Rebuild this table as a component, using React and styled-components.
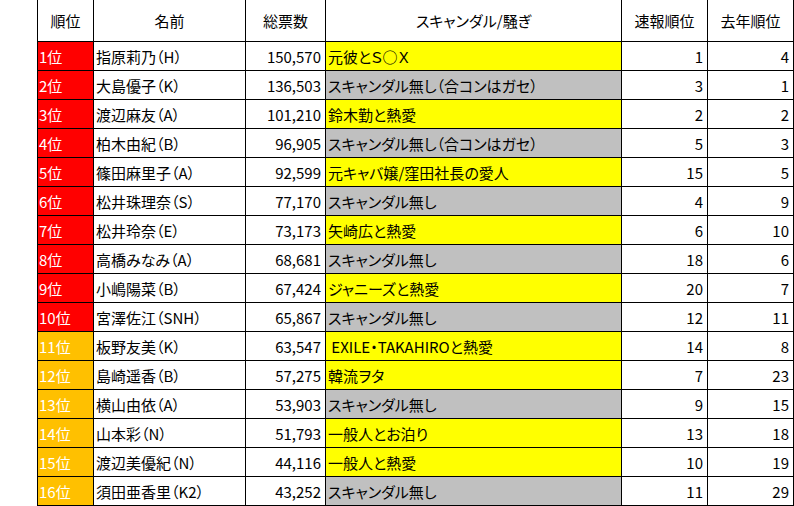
import React from 'react'
import styled, { createGlobalStyle } from 'styled-components'

const GlobalStyle = createGlobalStyle`
  html, body {
    margin: 0;
    padding: 0;
    background: #ffffff;
  }
  body {
    font-family: "Noto Sans CJK JP", "Noto Sans", sans-serif;
  }
`

const rows = [
  { name: '指原莉乃（H）', votes: '150,570', note: '元彼とＳ○Ｘ', hot: true, flash: 1, last: 4 },
  { name: '大島優子（K）', votes: '136,503', note: 'スキャンダル無し（合コンはガセ）', hot: false, flash: 3, last: 1 },
  { name: '渡辺麻友（A）', votes: '101,210', note: '鈴木勤と熱愛', hot: true, flash: 2, last: 2 },
  { name: '柏木由紀（B）', votes: '96,905', note: 'スキャンダル無し（合コンはガセ）', hot: false, flash: 5, last: 3 },
  { name: '篠田麻里子（A）', votes: '92,599', note: '元キャバ嬢/窪田社長の愛人', hot: true, flash: 15, last: 5 },
  { name: '松井珠理奈（S）', votes: '77,170', note: 'スキャンダル無し', hot: false, flash: 4, last: 9 },
  { name: '松井玲奈（E）', votes: '73,173', note: '矢崎広と熱愛', hot: true, flash: 6, last: 10 },
  { name: '高橋みなみ（A）', votes: '68,681', note: 'スキャンダル無し', hot: false, flash: 18, last: 6 },
  { name: '小嶋陽菜（B）', votes: '67,424', note: 'ジャニーズと熱愛', hot: true, flash: 20, last: 7 },
  { name: '宮澤佐江（SNH）', votes: '65,867', note: 'スキャンダル無し', hot: false, flash: 12, last: 11 },
  { name: '板野友美（K）', votes: '63,547', note: ' EXILE・TAKAHIROと熱愛', hot: true, flash: 14, last: 8 },
  { name: '島崎遥香（B）', votes: '57,275', note: '韓流ヲタ', hot: true, flash: 7, last: 23 },
  { name: '横山由依（A）', votes: '53,903', note: 'スキャンダル無し', hot: false, flash: 9, last: 15 },
  { name: '山本彩（N）', votes: '51,793', note: '一般人とお泊り', hot: true, flash: 13, last: 18 },
  { name: '渡辺美優紀（N）', votes: '44,116', note: '一般人と熱愛', hot: true, flash: 10, last: 19 },
  { name: '須田亜香里（K2）', votes: '43,252', note: 'スキャンダル無し', hot: false, flash: 11, last: 29 },
]

const headers = ['順位', '名前', '総票数', 'スキャンダル/騒ぎ', '速報順位', '去年順位']

function App() {
  return (
    <>
      <GlobalStyle />
      <Page>
        <Sheet>
          <Row $head>
            {headers.map((h) => (
              <HeadCell key={h}>{h}</HeadCell>
            ))}
          </Row>
          {rows.map((r, i) => (
            <Row key={r.name}>
              <RankCell $top={i < 10}>{i + 1}位</RankCell>
              <Cell>{r.name}</Cell>
              <NumCell>{r.votes}</NumCell>
              <Cell $fill={r.hot ? '#ffff00' : '#c0c0c0'}>{r.note}</Cell>
              <NumCell>{r.flash}</NumCell>
              <NumCell>{r.last}</NumCell>
            </Row>
          ))}
        </Sheet>
      </Page>
    </>
  )
}

const Page = styled.div`
  padding-left: 37px;
  width: 757px;
`

const Sheet = styled.div`
  display: flex;
  flex-direction: column;
  gap: 1px;
  background: #000000;
  padding: 0 1px 1px 1px;
`

const Row = styled.div`
  display: grid;
  grid-template-columns: 55px 151px 79px 295px 85px 85px;
  column-gap: 1px;
  height: ${(p) => (p.$head ? '41px' : '28px')};
`

const Cell = styled.div`
  display: flex;
  align-items: center;
  background: ${(p) => p.$fill || '#ffffff'};
  color: #000000;
  font-size: 15px;
  font-feature-settings: "palt";
  white-space: pre;
  overflow: hidden;
  padding: 0 2px;
  line-height: 1;
`

const HeadCell = styled(Cell)`
  justify-content: center;
`

const RankCell = styled(Cell)`
  background: ${(p) => (p.$top ? '#ff0000' : '#ffc000')};
  color: #ffffff;
  padding-left: 1px;
`

const NumCell = styled(Cell)`
  justify-content: flex-end;
  padding-right: 4px;
`

export default App
